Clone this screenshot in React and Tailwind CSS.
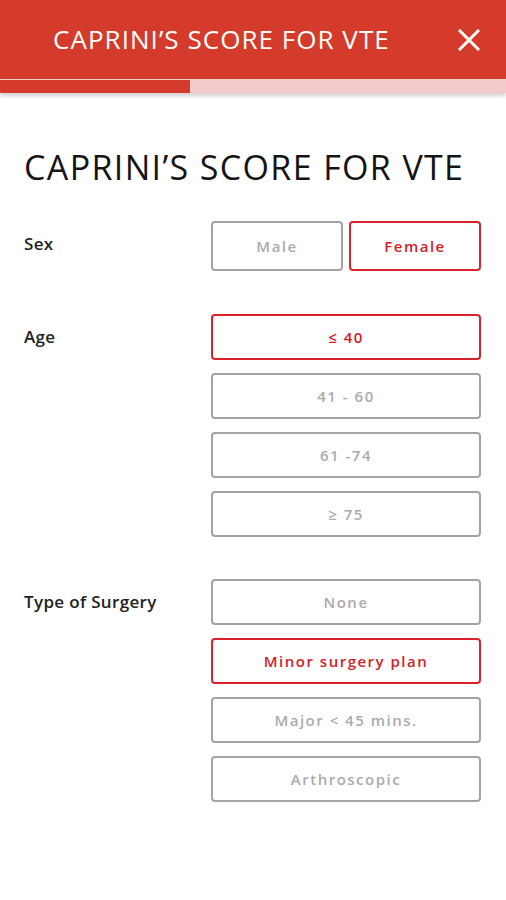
import React, { useState } from 'react';

const font = { fontFamily: '"Open Sans", "Noto Sans", sans-serif' };

function Option({ label, selected, onClick, className = '' }) {
  return (
    <button
      type="button"
      onClick={onClick}
      className={`h-[46px] rounded-[4px] border-2 bg-white text-[15px] font-semibold tracking-[0.1em] ${
        selected ? 'border-[#d8232a] text-[#d32027]' : 'border-[#a3a3a3] text-[#ababab]'
      } ${className}`}
    >
      {label}
    </button>
  );
}

function Row({ label, children, className = '', labelHeight = 'h-[46px]' }) {
  return (
    <div className={`flex items-start ${className}`}>
      <div className={`w-[187px] shrink-0 flex items-center ${labelHeight} text-[17px] font-semibold text-[#222] tracking-[0.02em]`}>
        {label}
      </div>
      <div className="flex-1">{children}</div>
    </div>
  );
}

export default function App() {
  const [sex, setSex] = useState('Female');
  const [age, setAge] = useState('≤ 40');
  const [surgery, setSurgery] = useState('Minor surgery plan');

  const ages = ['≤ 40', '41 - 60', '61 -74', '≥ 75'];
  const surgeries = ['None', 'Minor surgery plan', 'Major < 45 mins.', 'Arthroscopic'];

  return (
    <div className="w-[506px] h-[900px] bg-white overflow-hidden" style={font}>
      {/* Header */}
      <div className="h-[79px] bg-[#d43b2a] flex items-center pl-[53px] pr-[26px]">
        <div className="flex-1 text-white text-[26px] tracking-[0.04em]">CAPRINI’S SCORE FOR VTE</div>
        <button type="button" className="text-white">
          <svg width="22" height="22" viewBox="0 0 22 22" fill="none" stroke="currentColor" strokeWidth="3" strokeLinecap="square">
            <path d="M2 2L20 20M20 2L2 20" />
          </svg>
        </button>
      </div>
      <div className="h-px bg-[#f3d6d2]" />
      {/* Progress */}
      <div className="h-[13px] bg-[#f5cccd] flex shadow-[0_3px_4px_rgba(0,0,0,0.18)]">
        <div className="w-[190px] bg-[#d43b2a]" />
      </div>

      <div className="pl-[24px] pr-[25px]">
        <h1 className="mt-[52px] text-[34px] leading-[44px] text-[#141414] tracking-[0.04em]">CAPRINI’S SCORE FOR VTE</h1>

        <Row label="Sex" className="mt-[32px]" labelHeight="h-[46px]">
          <div className="flex gap-[6px]">
            {['Male', 'Female'].map((s) => (
              <Option key={s} label={s} selected={sex === s} onClick={() => setSex(s)} className="flex-1 h-[50px]" />
            ))}
          </div>
        </Row>

        <Row label="Age" className="mt-[43px]">
          <div className="flex flex-col gap-[13px]">
            {ages.map((a) => (
              <Option key={a} label={a} selected={age === a} onClick={() => setAge(a)} />
            ))}
          </div>
        </Row>

        <Row label="Type of Surgery" className="mt-[42px]">
          <div className="flex flex-col gap-[13px]">
            {surgeries.map((s) => (
              <Option key={s} label={s} selected={surgery === s} onClick={() => setSurgery(s)} />
            ))}
          </div>
        </Row>
      </div>
    </div>
  );
}
